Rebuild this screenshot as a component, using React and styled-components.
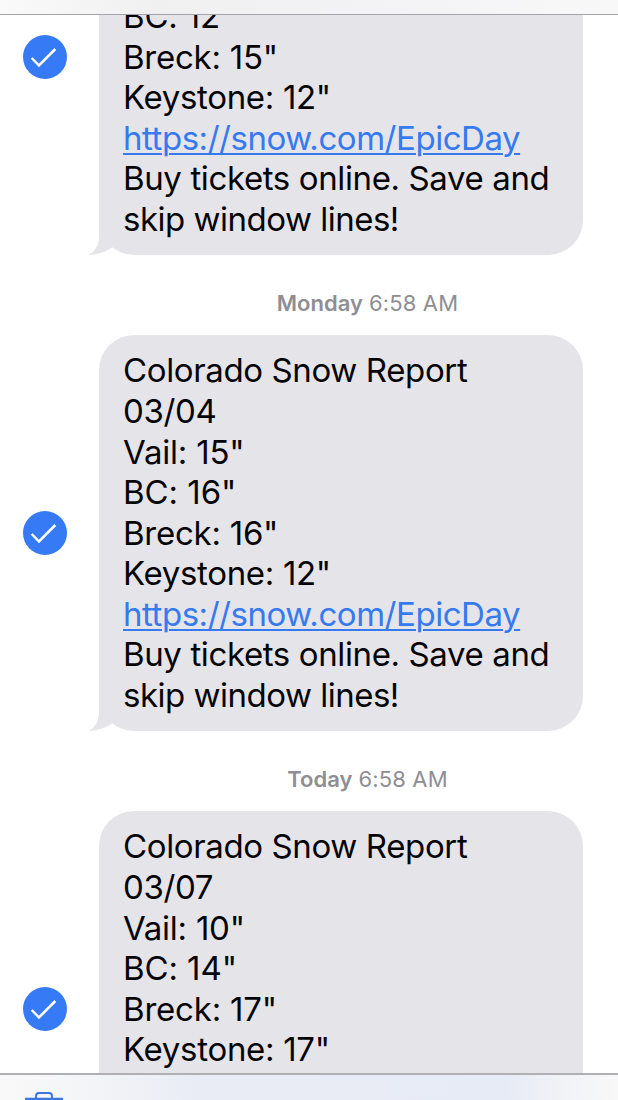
import React from "react";
import styled, { createGlobalStyle } from "styled-components";

const GlobalStyle = createGlobalStyle`
  * {
    box-sizing: border-box;
  }

  body {
    margin: 0;
    background-color: #fff;
    font-family: Inter, "Liberation Sans", sans-serif;
  }
`;

const Screen = styled.div`
  display: flex;
  flex-direction: column;
  width: 618px;
  height: 1100px;
  overflow: hidden;
`;

const TopBar = styled.header`
  flex: none;
  height: 15px;
  border-bottom: 1px solid #a4a3a7;
  background: linear-gradient(to right, #fafafa 0%, #f0f0f1 25%, #f3f3f5 60%, #f8f8f9 100%);
`;

const Thread = styled.main`
  flex: 1;
  min-height: 0;
  overflow: hidden;
`;

const Messages = styled.div`
  display: flex;
  flex-direction: column;
  margin-top: -156px;
`;

const MessageRow = styled.div`
  display: flex;
  align-items: center;
  padding-left: 23px;
`;

const CheckCircle = styled.span`
  display: flex;
  flex: none;
  width: 44px;
  height: 44px;
  margin-right: 32px;
  border-radius: 50%;
  background-color: #367af6;
`;

const Bubble = styled.div`
  position: relative;
  display: flex;
  flex-direction: column;
  justify-content: ${(props) => (props.$scrolled ? "flex-end" : "flex-start")};
  width: 484px;
  height: 395.5px;
  padding: 15.4px 24px 15px;
  border-radius: 35px;
  background-color: #e5e4e9;
`;

const Tail = styled.svg`
  position: absolute;
  left: -10px;
  bottom: 0;
`;

const Line = styled.span`
  position: relative;
  font-size: 33px;
  line-height: 40.56px;
  letter-spacing: ${(props) => props.$spacing}px;
  white-space: nowrap;
  color: #050507;
`;

const Link = styled.a`
  color: #367af0;
  text-decoration: underline;
  text-decoration-thickness: 2px;
  text-underline-offset: 3px;
`;

const Stamp = styled.div`
  display: flex;
  justify-content: center;
  align-items: center;
  gap: 6px;
  height: 80.5px;
  padding: 16px 0 0 117px;
  font-size: 22px;
  color: #8e8e93;
`;

const Day = styled.strong`
  font-weight: 600;
`;

const Time = styled.span`
  letter-spacing: 0.15px;
`;

const BottomBar = styled.footer`
  flex: none;
  height: 27px;
  padding: 17px 0 0 24px;
  border-top: 2px solid #b0b0b4;
  background: linear-gradient(to right, #f9f9f9 0%, #f3f4f7 16%, #e9ecf5 32%, #e7ebf5 82%, #f2f3f6 92%, #f8f8f8 100%);
  overflow: hidden;
`;

const footerLines = [
  { text: "https://snow.com/EpicDay", spacing: -0.46, link: true },
  { text: "Buy tickets online. Save and", spacing: -0.38 },
  { text: "skip window lines!", spacing: -0.5 },
];

const messages = [
  {
    id: 1,
    scrolled: true,
    lines: [
      { text: "BC: 12\"", spacing: -0.2 },
      { text: "Breck: 15\"", spacing: -0.25 },
      { text: "Keystone: 12\"", spacing: -0.33 },
      ...footerLines,
    ],
  },
  {
    id: 2,
    day: "Monday",
    time: "6:58 AM",
    lines: [
      { text: "Colorado Snow Report", spacing: -0.37 },
      { text: "03/04", spacing: -0.35 },
      { text: "Vail: 15\"", spacing: -0.2 },
      { text: "BC: 16\"", spacing: -0.05 },
      { text: "Breck: 16\"", spacing: -0.25 },
      { text: "Keystone: 12\"", spacing: -0.33 },
      ...footerLines,
    ],
  },
  {
    id: 3,
    day: "Today",
    time: "6:58 AM",
    lines: [
      { text: "Colorado Snow Report", spacing: -0.37 },
      { text: "03/07", spacing: -0.35 },
      { text: "Vail: 10\"", spacing: -0.25 },
      { text: "BC: 14\"", spacing: -0.1 },
      { text: "Breck: 17\"", spacing: -0.2 },
      { text: "Keystone: 17\"", spacing: -0.3 },
    ],
  },
];

function Check() {
  return (
    <CheckCircle>
      <svg width="44" height="44" viewBox="0 0 44 44" fill="none">
        <path d="M8.7 23 L16 30.5 L32.3 14" stroke="#fff" strokeWidth="2.5" />
      </svg>
    </CheckCircle>
  );
}

function Message({ message }) {
  return (
    <MessageRow>
      <Check />
      <Bubble $scrolled={message.scrolled}>
        <Tail width="46" height="42" viewBox="0 0 46 42">
          <path
            d="M10 0 V24 C9.5 33 6 38.5 -0.5 41.8 C8 41.8 17 39 23 34.5 L45 8 V0 Z"
            fill="#e5e4e9"
          />
        </Tail>
        {message.lines.map((line) => (
          <Line key={line.text} $spacing={line.spacing}>
            {line.link ? <Link>{line.text}</Link> : line.text}
          </Line>
        ))}
      </Bubble>
    </MessageRow>
  );
}

function App() {
  return (
    <>
      <GlobalStyle />
      <Screen>
        <TopBar />
        <Thread>
          <Messages>
            {messages.map((message) => (
              <React.Fragment key={message.id}>
                {message.day && (
                  <Stamp>
                    <Day>{message.day}</Day>
                    <Time>{message.time}</Time>
                  </Stamp>
                )}
                <Message message={message} />
              </React.Fragment>
            ))}
          </Messages>
        </Thread>
        <BottomBar>
          {/* Trash can */}
          <svg width="40" height="44" viewBox="0 0 40 44" fill="none" stroke="#3a78e0" strokeWidth="2">
            <path d="M1 7 H39" strokeWidth="2.4" />
            <path d="M12 7 V4 Q12 1 15 1 H25 Q28 1 28 4 V7" />
            <path d="M5 7 L7 40 Q7 43 10 43 H30 Q33 43 33 40 L35 7" />
          </svg>
        </BottomBar>
      </Screen>
    </>
  );
}

export default App;
